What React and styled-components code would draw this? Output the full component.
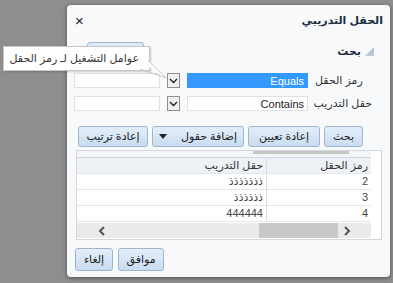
import React from 'react'
import styled, { createGlobalStyle } from 'styled-components'

const Global = createGlobalStyle`
  html, body { margin: 0; padding: 0; }
  body {
    font-family: "Liberation Sans", "DejaVu Sans", sans-serif;
    font-size: 11px;
    color: #333;
  }
`;

const Backdrop = styled.div`
  position: relative;
  width: 393px;
  height: 283px;
  box-sizing: border-box;
  padding: 5px 3px 6px 67px;
  background: #8e8e8e;
  overflow: hidden;
`;

const Dialog = styled.div`
  width: 323px;
  height: 272px;
  box-sizing: border-box;
  background: #f8f9fb;
  border-radius: 4px;
  box-shadow: 0 1px 4px rgba(0,0,0,0.45);
  display: flex;
  flex-direction: column;
`;

const TitleBar = styled.div`
  height: 30px;
  display: flex;
  align-items: center;
  justify-content: space-between;
  padding: 0 7px 0 8px;
`;

const Title = styled.div`
  font-weight: bold;
  font-size: 11px;
  color: #1d2e40;
`;

const Close = styled.div`
  font-size: 15px;
  color: #222;
  line-height: 1;
`;

const TopRow = styled.div`
  height: 38px;
  display: flex;
  justify-content: space-between;
  align-items: flex-start;
  padding: 0 15px 0 20px;
`;

const SectionHead = styled.div`
  margin-top: 10px;
  display: flex;
  align-items: center;
  gap: 3px;
  font-weight: bold;
  color: #1d2e40;
`;

const Btn = styled.button`
  width: ${p => p.$w}px;
  height: ${p => p.$h || 21}px;
  margin-top: ${p => p.$mt || 0}px;
  box-sizing: border-box;
  padding: 0;
  border: 1px solid #9db5cf;
  border-radius: 3px;
  background: linear-gradient(#e4eefa, #c9dcf1);
  font: inherit;
  color: #222;
  display: flex;
  align-items: center;
  justify-content: center;
  gap: 14px;
`;

const Form = styled.div`
  display: grid;
  grid-template-columns: 57px 121px 13px 86px;
  column-gap: 7px;
  row-gap: 8px;
  padding: 0 18px 0 8px;
`;

const Label = styled.div`
  height: 15px;
  line-height: 15px;
  text-align: left;
  white-space: nowrap;
  color: #333;
`;

const Select = styled.div`
  height: 15px;
  line-height: 15px;
  box-sizing: border-box;
  border: 1px solid ${p => (p.$active ? '#3399ff' : '#dde2e8')};
  background: ${p => (p.$active ? '#3399ff' : '#fff')};
  color: ${p => (p.$active ? '#fff' : '#222')};
  padding: 0 3px;
  direction: ltr;
  text-align: right;
`;

const Drop = styled.div`
  height: 15px;
  box-sizing: border-box;
  border: 1px solid #8f8f8f;
  background: #f0f0f0;
  display: flex;
  align-items: center;
  justify-content: center;
`;

const Input = styled.div`
  height: 15px;
  box-sizing: border-box;
  border: 1px solid #dde2e8;
  background: #fff;
`;

const ButtonRow = styled.div`
  display: flex;
  gap: 4px;
  padding: 0 27px 0 0;
  margin-top: 15px;
`;

const TableBox = styled.div`
  margin: 3px 8px 0 9px;
  height: 90px;
  box-sizing: border-box;
  border: 1px solid #d3d8df;
  background: #fff;
  display: flex;
  flex-direction: column;
  align-items: flex-end;
`;

const Ghost = styled.div`
  height: 6px;
  width: 294px;
  position: relative;
  background: #f4f5f6;
  border-bottom: 1px solid #d3d8df;
`;

const GhostThumb = styled.div`
  position: absolute;
  top: 0;
  left: 176px;
  width: 96px;
  height: 3px;
  background: #c6c6c6;
`;

const Row = styled.div`
  width: 294px;
  height: 16px;
  display: grid;
  grid-template-columns: 105px 189px;
  background: ${p => (p.$head ? '#eef2f7' : '#fff')};
  border-bottom: 1px solid #e3e6ea;
  box-sizing: border-box;
`;

const Cell = styled.div`
  line-height: 15px;
  padding: 0 3px;
  text-align: right;
  color: ${p => (p.$head ? '#333' : '#444')};
  border-left: ${p => (p.$first ? '1px solid #d8dde3' : 'none')};
`;

const HScroll = styled.div`
  width: 294px;
  height: 15px;
  margin-top: 1px;
  background: #ebebeb;
  display: flex;
  align-items: center;
  padding: 0 20px 0 21px;
  box-sizing: border-box;
  direction: ltr;
`;

const Thumb = styled.div`
  width: 79px;
  height: 15px;
  background: #c8c8c8;
  margin-left: auto;
  margin-right: 6px;
`;

const Footer = styled.div`
  margin-top: auto;
  display: flex;
  justify-content: flex-end;
  gap: 5px;
  padding: 0 0 6px 8px;
`;

const Tooltip = styled.div`
  position: absolute;
  left: 3px;
  top: 46px;
  width: 147px;
  height: 25px;
  box-sizing: border-box;
  background: #fff;
  border: 1px solid #c8c8c8;
  box-shadow: 1px 1px 2px rgba(0,0,0,0.2);
  direction: rtl;
  padding: 0 10px;
  line-height: 23px;
  text-align: right;
  color: #333;
  white-space: nowrap;
`;

const Tail = styled.svg`
  position: absolute;
  left: 138px;
  top: 60px;
`;

const Chevron = () => (
  <svg width="9" height="6" viewBox="0 0 9 6">
    <path d="M1 1 L4.5 4.5 L8 1" fill="none" stroke="#222" strokeWidth="1.4" />
  </svg>
)

const Arrow = ({ dir }) => (
  <svg width="7" height="10" viewBox="0 0 7 10">
    <path d={dir === 'left' ? 'M6 1 L2 5 L6 9' : 'M1 1 L5 5 L1 9'} fill="none" stroke="#555" strokeWidth="2" />
  </svg>
)

const rows = [
  ['2', 'ذذذذذذذ'],
  ['3', 'ذذذذذذ'],
  ['4', '444444'],
]

export default function App() {
  return (
    <Backdrop>
      <Global />
      <Dialog dir="rtl">
        <TitleBar>
          <Title>الحقل التدريبي</Title>
          <Close>×</Close>
        </TitleBar>
        <TopRow>
          <SectionHead>
            <svg width="11" height="11" viewBox="0 0 11 11">
              <path d="M10 1 L10 10 L1 10 Z" fill="#b7c6d8" />
            </svg>
            بحث
          </SectionHead>
          <Btn $w={57} $mt={7} />
        </TopRow>
        <Form>
          <Label>رمز الحقل</Label>
          <Select $active>Equals</Select>
          <Drop><Chevron /></Drop>
          <Input />
          <Label>حقل التدريب</Label>
          <Select>Contains</Select>
          <Drop><Chevron /></Drop>
          <Input />
        </Form>
        <ButtonRow>
          <Btn $w={39}>بحث</Btn>
          <Btn $w={72}>إعادة تعيين</Btn>
          <Btn $w={92}>
            إضافة حقول
            <svg width="8" height="5" viewBox="0 0 8 5"><path d="M0 0 L8 0 L4 5 Z" fill="#222" /></svg>
          </Btn>
          <Btn $w={70}>إعادة ترتيب</Btn>
        </ButtonRow>
        <TableBox>
          <Ghost><GhostThumb /></Ghost>
          <Row $head>
            <Cell $head $first>رمز الحقل</Cell>
            <Cell $head>حقل التدريب</Cell>
          </Row>
          {rows.map(([a, b]) => (
            <Row key={a}>
              <Cell $first>{a}</Cell>
              <Cell>{b}</Cell>
            </Row>
          ))}
          <HScroll>
            <Arrow dir="left" />
            <Thumb />
            <Arrow dir="right" />
          </HScroll>
        </TableBox>
        <Footer>
          <Btn $w={46} $h={23}>موافق</Btn>
          <Btn $w={38} $h={23}>إلغاء</Btn>
        </Footer>
      </Dialog>
      <Tooltip>عوامل التشغيل لـ رمز الحقل</Tooltip>
      <Tail width="32" height="20" viewBox="0 0 32 20">
        <path d="M0 0 L10 0 L28 18 Z" fill="#fff" />
        <path d="M10 0.5 L28 18 L2 9" fill="none" stroke="#c8c8c8" />
      </Tail>
    </Backdrop>
  )
}
